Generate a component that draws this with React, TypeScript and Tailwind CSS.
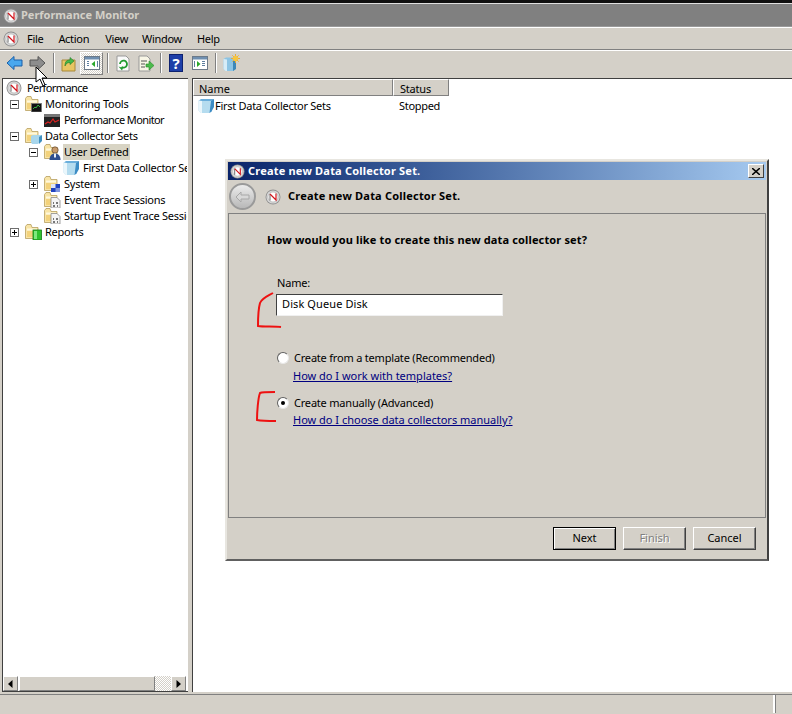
const FACE = "bg-[#d4d0c8]";
const RAISED = "border border-t-white border-l-white border-r-[#808080] border-b-[#808080]";

function PerfIcon({ size = 16 }: { size?: number }) {
  return (
    <svg width={size} height={size} viewBox="0 0 16 16" className="shrink-0">
      <circle cx="8" cy="8" r="7.5" fill="#8f8f8f" />
      <circle cx="8" cy="8" r="6.6" fill="#d8d8d8" />
      <circle cx="8" cy="8" r="5" fill="#fff" stroke="#9a9a9a" strokeWidth="0.5" />
      <path d="M5 11.5V5" stroke="#555" strokeWidth="0.9" fill="none" />
      <path d="M5 5l6 6V4.5" stroke="#d2141c" strokeWidth="1.2" fill="none" />
    </svg>
  );
}

function Cube({ size = 16 }: { size?: number }) {
  return (
    <svg width={size} height={size} viewBox="0 0 16 16" className="shrink-0">
      <path d="M0.5 2.5L3 1h13l-2.5 2v10.5L11.5 15H2.5L0.5 12.5z" fill="#b5dcef" />
      <path d="M3 1h13l-2.5 2H1z" fill="#6aaedb" />
      <path d="M0.5 2.5L4 3v12H2.5L0.5 12.5z" fill="#eaf6fb" />
      <path d="M13 3l3-2v8l-2.5 4.5L11.5 15z" fill="#3d8cc4" />
    </svg>
  );
}

function Folder({ badge }: { badge?: "chart" | "cube" | "user" | "system" | "doc" | "green" }) {
  return (
    <svg width="17" height="16" viewBox="0 0 17 16" className="shrink-0">
      <path d="M0.5 2.5V14.5H13V3.5H7L6 0.5H2z" fill="#f8e4a6" stroke="#b8a060" strokeWidth="0.8" />
      <path d="M2 4.5h10v2H2z" fill="#fff8dc" />
      <path d="M2 7h10v6H2z" fill="#f3d27c" />
      {badge === "chart" && (
        <>
          <rect x="6.5" y="7.5" width="10" height="8.5" fill="#111" stroke="#777" strokeWidth="0.8" />
          <path d="M8 13l2-2 1 1 2-3 2 2" fill="none" stroke="#3fd04a" strokeWidth="0.8" />
        </>
      )}
      {badge === "cube" && (
        <>
          <path d="M6 8l2-1h9l-2 2v5l-2 2H7l-1-2z" fill="#a8d6ec" />
          <path d="M14 9l3-2v6l-3 3z" fill="#3f8fc0" />
        </>
      )}
      {badge === "user" && (
        <>
          <circle cx="11" cy="6" r="3.2" fill="#c79a6b" stroke="#4a3418" strokeWidth="0.6" />
          <path d="M5.5 16c0-4 2-6.5 5.5-6.5s5.5 2.5 5.5 6.5z" fill="#2f4f8f" />
          <path d="M10 9.5h2v4h-2z" fill="#e8eef8" />
        </>
      )}
      {badge === "system" && (
        <>
          <rect x="7" y="8" width="9" height="8" fill="#2143c0" />
          <rect x="7" y="8" width="4.5" height="4" fill="#dfe6f7" />
          <rect x="11.5" y="12" width="4.5" height="4" fill="#7f95dd" />
        </>
      )}
      {badge === "doc" && (
        <>
          <path d="M7 5.5h6l3 3V16H7z" fill="#f4f4f4" stroke="#8a8a8a" strokeWidth="0.8" />
          <path d="M9 10h1v2H9zM12 10h2v2h-2zM9 13h2v2H9zM13 13h1v2h-1z" fill="#777" />
        </>
      )}
      {badge === "green" && (
        <>
          <rect x="8" y="6" width="8.5" height="10" fill="#2fc22f" stroke="#157a15" strokeWidth="0.8" />
          <rect x="9" y="7" width="3" height="8" fill="#7ee87e" />
        </>
      )}
    </svg>
  );
}

function Expander({ open }: { open: boolean }) {
  return (
    <span className="relative w-[9px] h-[9px] border border-[#6e6e6e] bg-white shrink-0">
      <span className="absolute left-[1px] top-[3px] w-[5px] h-px bg-black" />
      {!open && <span className="absolute left-[3px] top-[1px] w-px h-[5px] bg-black" />}
    </span>
  );
}

function TreeRow({
  indent,
  open,
  icon,
  label,
  selected,
}: {
  indent: string;
  open?: boolean;
  icon: React.ReactNode;
  label: string;
  selected?: boolean;
}) {
  return (
    <div className={`h-4 flex items-center whitespace-nowrap ${indent}`}>
      <span className="w-[15px] flex items-center shrink-0">{open !== undefined && <Expander open={open} />}</span>
      <span className="w-[20px] shrink-0 flex items-center">{icon}</span>
      <span className={`ml-[-1px] px-[1px] h-4 leading-4 tracking-[-0.25px] ${selected ? "bg-[#d8d4c4]" : ""}`}>{label}</span>
    </div>
  );
}

function ToolSep({ gap }: { gap: string }) {
  return <span className={`w-[2px] h-[20px] border-l border-[#808080] border-r border-r-white shrink-0 ${gap}`} />;
}

function Toolbar() {
  return (
    <div className={`h-[25px] ${FACE} flex items-center pl-[6px] border-t border-white`}>
      <svg width="17" height="16" viewBox="0 0 17 16" className="shrink-0">
        <path d="M1 8l7-6.5V5h8v6H8v3.5z" fill="#4aa8ee" stroke="#1a5fa8" />
      </svg>
      <svg width="17" height="16" viewBox="0 0 17 16" className="ml-[6px] shrink-0">
        <path d="M16 8L9 1.5V5H1v6h8v3.5z" fill="#8d8d8d" stroke="#555" />
      </svg>
      <ToolSep gap="ml-[7px]" />
      <svg width="16" height="17" viewBox="0 0 16 17" className="ml-[6px] shrink-0">
        <path d="M1 5h13v11H1z" fill="#e8c563" stroke="#a8883a" />
        <path d="M4 11c0-5 2-6 5-6V2.5L13 6l-4 3.5V7.5c-2 0-4 .5-5 3.5z" fill="#46b84a" stroke="#1f7a25" strokeWidth="0.6" />
      </svg>
      <span className="ml-[3px] w-[23px] h-[23px] border border-t-white border-l-white border-r-[#808080] border-b-[#808080] bg-[repeating-conic-gradient(#ffffff_0%_25%,#d4d0c8_0%_50%)] bg-[length:2px_2px] flex items-center justify-center shrink-0">
        <svg width="16" height="16" viewBox="0 0 16 16">
          <rect x="0.5" y="1.5" width="15" height="13" fill="#fff" stroke="#6c7a88" />
          <rect x="1" y="2" width="14" height="2.5" fill="#6f8fb0" />
          <path d="M11 6v6L7.5 9z" fill="#2aa82a" />
          <path d="M3 6h2v1H3zM3 8h2v1H3zM3 10h2v1H3zM13 6h1v6h-1z" fill="#5e7e9e" />
        </svg>
      </span>
      <ToolSep gap="ml-[4px]" />
      <svg width="15" height="17" viewBox="0 0 15 17" className="ml-[7px] shrink-0">
        <path d="M1 1h9l3 3v12H1z" fill="#fafafa" stroke="#999" />
        <path d="M4 9a3.5 3.5 0 1 1 1.5 3" fill="none" stroke="#1f9a2e" strokeWidth="1.8" />
        <path d="M2.5 11.5L7 13l-1 2.5z" fill="#1f9a2e" />
      </svg>
      <svg width="17" height="17" viewBox="0 0 17 17" className="ml-[6px] shrink-0">
        <path d="M2 1h8l3 3v12H2z" fill="#f8f6e6" stroke="#999" />
        <path d="M4 6h6M4 9h4M4 12h4" stroke="#555" />
        <path d="M9 9h3V6l5 4.5-5 4.5v-3H9z" fill="#4cbb4c" stroke="#2a8a2a" strokeWidth="0.6" />
      </svg>
      <ToolSep gap="ml-[6px]" />
      <span className="ml-[7px] w-[14px] h-[18px] bg-[#1e3fa8] border border-[#0e2270] text-white font-bold text-[15px] leading-[16px] text-center shrink-0">?</span>
      <svg width="16" height="16" viewBox="0 0 16 16" className="ml-[9px] shrink-0">
        <rect x="0.5" y="1.5" width="15" height="13" fill="#fff" stroke="#6c7a88" />
        <rect x="1" y="2" width="14" height="2.5" fill="#6f8fb0" />
        <path d="M5 6v6l3.5-3z" fill="#2aa82a" />
        <path d="M10 6h3v1h-3zM10 8h3v1h-3zM10 10h3v1h-3zM2 6h1v6H2z" fill="#5e7e9e" />
      </svg>
      <ToolSep gap="ml-[7px]" />
      <svg width="17" height="18" viewBox="0 0 17 18" className="ml-[6px] shrink-0">
        <path d="M0.5 5L3 3.5h10v11L10.5 17H2.5l-2-2z" fill="#8cc4e4" />
        <path d="M0.5 5L4 5.5V17H2.5l-2-2z" fill="#d6ecf7" />
        <path d="M10 6l3-2v11l-3 2z" fill="#3d88b8" />
        <path d="M12.5 0v9M8 4.5h9M9.3 1.3l6.4 6.4M15.7 1.3l-6.4 6.4" stroke="#f0a820" strokeWidth="0.9" />
        <circle cx="12.5" cy="4.5" r="2.7" fill="#f5c542" />
      </svg>
    </div>
  );
}

function ScrollButton({ dir }: { dir: "left" | "right" }) {
  return (
    <span className={`w-[15px] h-full ${FACE} ${RAISED} flex items-center justify-center shrink-0`}>
      <svg width="5" height="8" viewBox="0 0 5 8">
        <path d={dir === "left" ? "M4.5 0v8L0 4z" : "M0.5 0v8L5 4z"} fill="#000" />
      </svg>
    </span>
  );
}

function LeftPane() {
  return (
    <div className="w-[186px] ml-[2px] flex flex-col bg-white border-l border-t border-b border-[#404040] shrink-0">
      <div className="flex-1 overflow-hidden pt-px pl-[2px] mr-[1px]">
        <div className="h-4 flex items-center gap-[4px] pl-[1px] whitespace-nowrap">
          <PerfIcon size={16} />
          <span className="ml-[1px] tracking-[-0.6px]">Performance</span>
        </div>
        <TreeRow indent="pl-[5px]" open icon={<Folder badge="chart" />} label="Monitoring Tools" />
        <div className="h-4 flex items-center pl-[39px] whitespace-nowrap">
          <svg width="16" height="13" viewBox="0 0 16 13" className="shrink-0">
            <rect x="0" y="0" width="16" height="13" fill="#222" />
            <rect x="0" y="0" width="16" height="3" fill="#777" />
            <path d="M1 10l3-2 2 1 3-4 2 3 4-2" fill="none" stroke="#d22" strokeWidth="1.2" />
          </svg>
          <span className="ml-[4px] tracking-[-0.6px]">Performance Monitor</span>
        </div>
        <TreeRow indent="pl-[5px]" open icon={<Folder badge="cube" />} label="Data Collector Sets" />
        <TreeRow indent="pl-[24px]" open icon={<Folder badge="user" />} label="User Defined" selected />
        <div className="h-4 flex items-center pl-[58px] whitespace-nowrap overflow-hidden">
          <Cube />
          <span className="ml-[4px] tracking-[-0.28px]">First Data Collector Sets</span>
        </div>
        <TreeRow indent="pl-[24px]" open={false} icon={<Folder badge="system" />} label="System" />
        <TreeRow indent="pl-[24px]" icon={<Folder badge="doc" />} label="Event Trace Sessions" />
        <div className="overflow-hidden">
          <TreeRow indent="pl-[24px]" icon={<Folder badge="doc" />} label="Startup Event Trace Sessions" />
        </div>
        <TreeRow indent="pl-[5px]" open={false} icon={<Folder badge="green" />} label="Reports" />
      </div>
      <div className="h-[15px] flex mr-[2px]">
        <ScrollButton dir="left" />
        <span className={`w-[136px] ${FACE} ${RAISED} shrink-0 ml-[1px]`} />
        <span className="flex-1 bg-[repeating-conic-gradient(#ffffff_0%_25%,#d4d0c8_0%_50%)] bg-[length:2px_2px]" />
        <ScrollButton dir="right" />
      </div>
    </div>
  );
}

function RightPane() {
  return (
    <div className="flex-1 ml-[4px] bg-white border-l border-t border-[#404040] min-w-0">
      <div className="h-[17px] flex">
        <span className={`w-[200px] ${FACE} ${RAISED} pl-[5px] pt-px leading-[15px]`}>Name</span>
        <span className={`w-[56px] ${FACE} ${RAISED} pl-[6px] pt-px leading-[15px] tracking-[-0.2px]`}>Status</span>
        <span className="flex-1" />
      </div>
      <div className="h-4 mt-[2px] flex items-center whitespace-nowrap pl-[5px]">
        <Cube />
        <span className="ml-px w-[184px] tracking-[-0.28px]">First Data Collector Sets</span>
        <span className="tracking-[-0.3px]">Stopped</span>
      </div>
    </div>
  );
}

function DialogButton({ label, primary, disabled }: { label: string; primary?: boolean; disabled?: boolean }) {
  return (
    <span
      className={`w-[63px] h-[23px] ${FACE} flex items-center justify-center ${
        primary
          ? "border border-black shadow-[inset_1px_1px_0_#fff,inset_-1px_-1px_0_#808080]"
          : "border border-t-white border-l-white border-r-[#404040] border-b-[#404040] shadow-[inset_-1px_-1px_0_#808080]"
      } ${disabled ? "text-[#808080] [text-shadow:1px_1px_0_#fff]" : "text-black"}`}
    >
      {label}
    </span>
  );
}

function Radio({ checked }: { checked?: boolean }) {
  return (
    <span className="w-[12px] h-[12px] rounded-full bg-white border border-t-[#606060] border-l-[#606060] border-r-[#e8e8e8] border-b-[#e8e8e8] flex items-center justify-center shrink-0">
      {checked && <span className="w-[4px] h-[4px] rounded-full bg-black" />}
    </span>
  );
}

function Dialog() {
  return (
    <div className={`absolute left-[225px] top-[159px] w-[544px] h-[402px] ${FACE} border-2 border-t-[#e8e6e0] border-l-[#e8e6e0] border-r-[#404040] border-b-[#606060] p-px flex flex-col`}>
      <div className="h-[18px] bg-gradient-to-r from-[#0a246a] to-[#a6caf0] flex items-center pl-[2px] pr-[2px] shrink-0">
        <PerfIcon size={15} />
        <span className="ml-[3px] font-bold text-white flex-1 tracking-[0.2px]">Create new Data Collector Set.</span>
        <span className={`w-[16px] h-[14px] ${FACE} border border-t-white border-l-white border-r-[#404040] border-b-[#404040] flex items-center justify-center`}>
          <svg width="8" height="7" viewBox="0 0 8 7">
            <path d="M0 0l8 7M8 0L0 7" stroke="#000" strokeWidth="1.5" />
          </svg>
        </span>
      </div>
      <div className="h-[33px] flex items-center pl-[1px] shrink-0">
        <span className="w-[27px] h-[27px] rounded-full border-2 border-[#9a9a9a] bg-gradient-to-b from-[#ececec] to-[#b8b8b8] flex items-center justify-center shrink-0">
          <svg width="16" height="12" viewBox="0 0 16 12">
            <path d="M1 6l5-5v3h8v4H6v3z" fill="#d8d8d8" stroke="#a8a8a8" />
          </svg>
        </span>
        <span className="ml-[9px]"><PerfIcon size={16} /></span>
        <span className="ml-[7px] font-bold text-black tracking-[0.2px]">Create new Data Collector Set.</span>
      </div>
      <div className="h-[305px] border border-[#808080] shrink-0 pl-[38px] pt-[18px]">
        <div className="font-bold leading-4 tracking-[0.14px]">How would you like to create this new data collector set?</div>
        <div className="ml-[10px] mt-[27px] leading-4 tracking-[-0.2px]">Name:</div>
        <div className="ml-[9px] mt-[3px] w-[227px] h-[22px] bg-white border border-t-[#404040] border-l-[#404040] border-r-[#f0f0f0] border-b-[#f0f0f0] pl-[5px] leading-[18px] tracking-[0.1px]">
          Disk Queue Disk
        </div>
        <div className="ml-[10px] mt-[34px] flex items-center h-4">
          <Radio />
          <span className="ml-[5px] tracking-[-0.2px]">Create from a template (Recommended)</span>
        </div>
        <a className="block ml-[26px] mt-[2px] leading-4 text-[#000080] underline">How do I work with templates?</a>
        <div className="ml-[10px] mt-[11px] flex items-center h-4">
          <Radio checked />
          <span className="ml-[5px] tracking-[-0.2px]">Create manually (Advanced)</span>
        </div>
        <a className="block ml-[26px] mt-[1px] leading-4 text-[#000080] underline">How do I choose data collectors manually?</a>
      </div>
      <div className="flex-1 flex items-center justify-end gap-[7px] pr-[10px]">
        <DialogButton label="Next" primary />
        <DialogButton label="Finish" disabled />
        <DialogButton label="Cancel" />
      </div>
    </div>
  );
}

export default function App() {
  return (
    <div className={`relative w-[792px] h-[714px] overflow-hidden bg-[#d4d0c8] text-[11px] text-black font-['Noto_Sans','Liberation_Sans',sans-serif]`}>
      <div className="h-[3px] bg-[#101010]" />
      <div className="h-px bg-[#e0e0e0]" />
      <div className="h-[23px] bg-[#808080] flex items-center pl-[3px] pt-px border-b border-[#9a9a9a]">
        <PerfIcon size={16} />
        <span className="ml-[2px] font-bold text-[#d4d0c8]">Performance Monitor</span>
      </div>
      <div className="h-[23px] flex items-center pl-[3px] pt-px border-t border-white border-b border-b-[#808080]">
        <PerfIcon size={16} />
        <span className="ml-[8px] tracking-[-0.3px]">File</span>
        <span className="ml-[15px] tracking-[-0.3px]">Action</span>
        <span className="ml-[16px] tracking-[-0.3px]">View</span>
        <span className="ml-[14px] tracking-[-0.3px]">Window</span>
        <span className="ml-[15px] tracking-[-0.3px]">Help</span>
      </div>
      <Toolbar />
      <div className="h-[614px] mt-[3px] flex">
        <LeftPane />
        <RightPane />
      </div>
      <div className="h-[19px] mt-[2px] flex border-t border-t-[#808080]">
        <span className="flex-1 border-r-2 border-r-white" />
        <span className="w-[17px] border-l border-l-[#808080]" />
      </div>

      <Dialog />

      {/* red pen marks and mouse pointer drawn over the shot */}
      <svg className="absolute left-[250px] top-[288px]" width="40" height="140" viewBox="0 0 40 140" fill="none">
        <path d="M23 5c-5 3-11 5-13 10-2 7-2 15-2 23 6 1 16 0 23 1" stroke="#ee1111" strokeWidth="2" />
        <path d="M25 104c-5 0-13 0-15 1-2 5-3 20-3 27 5 1 13 1 19 1" stroke="#ee1111" strokeWidth="2" />
      </svg>
      <svg className="absolute left-[35px] top-[66px]" width="13" height="21" viewBox="0 0 13 21">
        <path d="M1 1v15l4-3 3 7 2-1-3-7h5z" fill="#fff" stroke="#000" />
      </svg>
    </div>
  );
}
